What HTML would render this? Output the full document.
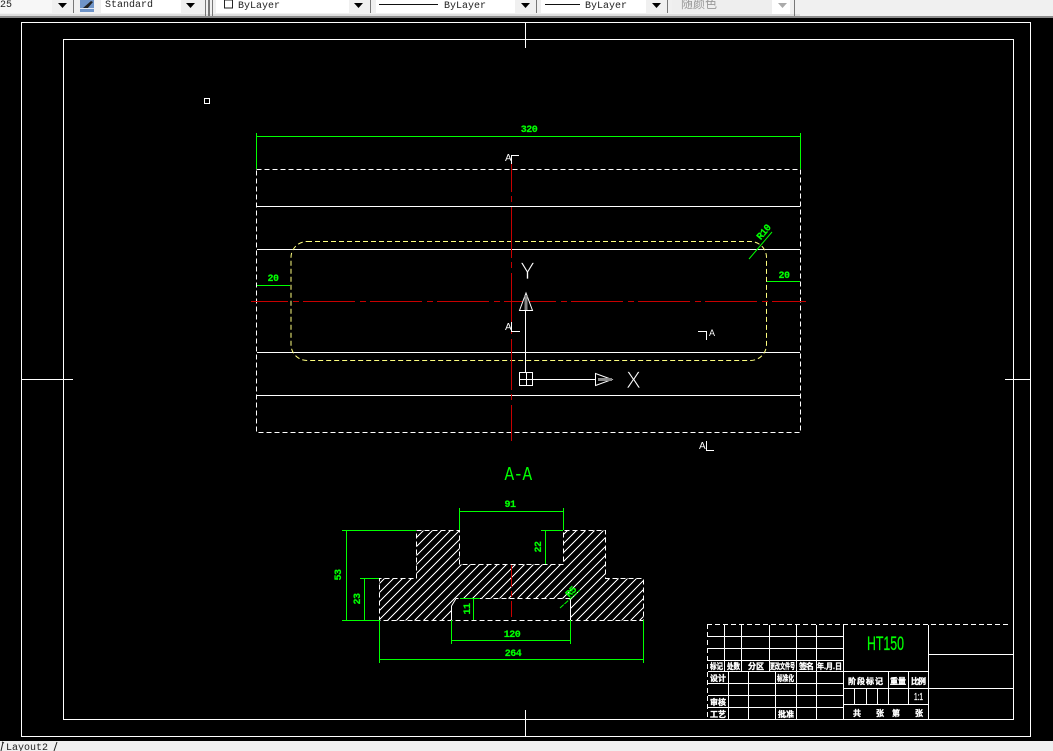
<!DOCTYPE html>
<html><head><meta charset="utf-8"><title>CAD</title>
<style>
html,body{margin:0;padding:0;width:1053px;height:751px;overflow:hidden;background:#000}
svg{display:block}
.l{stroke:#fff;stroke-width:1;fill:none;shape-rendering:crispEdges}
.g{stroke:#00ff00;stroke-width:1;fill:none;shape-rendering:crispEdges}
.d{stroke-dasharray:5 3}
.tb{font-family:"Liberation Mono",monospace;font-size:10px;fill:#222}
.gt{font-family:"Liberation Mono",monospace;font-size:10px;font-weight:bold;fill:#00ff00;text-anchor:middle;stroke:#00ff00;stroke-width:.2;letter-spacing:-.5px}
.cj{font-family:"Liberation Sans","Noto Sans CJK SC",sans-serif;font-size:8px;font-weight:bold;fill:#fff;stroke:#fff;stroke-width:.35}
.a{font-family:"Liberation Sans",sans-serif;font-size:10px;fill:#fff}
.ucs{font-family:"Liberation Sans",sans-serif;font-size:24px;fill:#fff;stroke:#000;stroke-width:.8;paint-order:fill stroke}
</style></head>
<body>
<svg width="1053" height="751" viewBox="0 0 1053 751" xmlns="http://www.w3.org/2000/svg">
<defs>
<pattern id="h" width="9" height="9" patternUnits="userSpaceOnUse"><path d="M-1 10L10 -1M-1 1L1 -1M8 10L10 8" stroke="#fff" stroke-width="1" fill="none" shape-rendering="crispEdges"/></pattern>
</defs>
<rect width="1053" height="751" fill="#000"/>
<!-- top toolbar -->
<rect x="0" y="0" width="1053" height="17" fill="#f0f0f0"/>
<rect x="0" y="16" width="1053" height="2" fill="#8c8c8c"/>
<rect x="0" y="14" width="800" height="2" fill="#dedede"/>
<rect x="0" y="0" width="52" height="13" fill="#f7f7f7"/><rect x="101" y="0" width="80" height="13" fill="#fff"/>
<rect x="216" y="0" width="133" height="13" fill="#fff"/><rect x="376" y="0" width="139" height="13" fill="#fff"/><rect x="541" y="0" width="105" height="13" fill="#fff"/>
<rect x="672" y="0" width="100" height="13" fill="#eee"/><rect x="772" y="0" width="18" height="14" fill="#fff"/>
<g fill="#000"><path d="M58 3h9l-4.500 5z"/><path d="M186 3h9l-4.500 5z"/><path d="M354 3h9l-4.500 5z"/><path d="M521 3h9l-4.500 5z"/><path d="M652 3h9l-4.500 5z"/></g>
<path d="M778 3h9l-4.500 5z" fill="#aaa"/>
<g fill="#777"><rect x="73" y="0" width="1" height="13"/><rect x="205" y="0" width="1" height="16"/><rect x="208" y="0" width="2" height="16"/><rect x="212" y="0" width="1" height="16"/><rect x="370" y="0" width="1" height="13"/><rect x="536" y="0" width="1" height="13"/><rect x="667" y="0" width="1" height="13"/><rect x="794" y="0" width="1" height="16"/></g>
<rect x="80" y="0" width="14" height="12" fill="#6f94c8"/><path d="M83 8L91 1l2 1-6 7z" fill="#222"/><rect x="80" y="8" width="14" height="1" fill="#dfe8f5"/>
<text class="tb" x="0" y="7">25</text>
<text class="tb" x="105" y="7">Standard</text>
<rect x="224.500" y="0" width="8" height="8" fill="#fff" stroke="#222"/>
<text class="tb" x="238" y="8">ByLayer</text>
<rect x="379" y="4" width="59" height="1" fill="#111"/>
<text class="tb" x="444" y="8">ByLayer</text>
<rect x="545" y="4" width="35" height="1" fill="#111"/>
<text class="tb" x="585" y="8">ByLayer</text>
<text x="681" y="8" style="font-family:'Liberation Sans','Noto Sans CJK SC',sans-serif;font-size:12px;fill:#999">随颜色</text>
<!-- bottom bar -->
<rect x="0" y="741" width="1053" height="10" fill="#f0f0f0"/>
<text x="6" y="750" style="font-family:'Liberation Mono',monospace;font-size:10px;fill:#222">Layout2</text>
<path d="M3 742L1 751M2 742l2 1M57 742l-3 9" stroke="#222" fill="none"/>
<!-- sheet -->
<rect class="l" x="21.500" y="22.500" width="1009" height="714"/>
<rect class="l" x="63.500" y="39.500" width="950" height="680"/>
<path class="l" d="M525.500 23V48M525.500 710V737M22 379.500H73M1005 379.500H1030"/>
<rect class="l" x="204.500" y="98.500" width="5" height="5"/>
<!-- plan -->
<path class="l" d="M257 206.500H800M257 249.500H800M257 352.500H800M257 395.500H800"/>
<rect class="l d" x="256.500" y="169.500" width="544" height="263"/>
<rect x="291" y="241.500" width="475.500" height="119" rx="16" ry="16" fill="none" stroke="#ffff80" stroke-width="1" stroke-dasharray="5 3"/>
<path d="M251 301.500H806" stroke="#c80000" fill="none" stroke-dasharray="52 5 6 4" stroke-dashoffset="15" shape-rendering="crispEdges"/>
<path d="M511.500 164V441" stroke="#c80000" fill="none" stroke-dasharray="51 4 6 5" stroke-dashoffset="23" shape-rendering="crispEdges"/>
<!-- plan dims -->
<path class="g" d="M256.500 133V169M800.500 133V169M256 136.500H801"/>
<text class="gt" x="529" y="132">320</text>
<path class="g" d="M257 285.500H290"/><text class="gt" x="273" y="281">20</text>
<path class="g" d="M767 281.500H800"/><text class="gt" x="784" y="278">20</text>
<path d="M749 259L772 232" stroke="#00ff00" fill="none"/>
<text class="gt" transform="translate(766 234) rotate(-50)" x="0" y="0">R10</text>
<!-- section marks -->
<text class="a" x="505" y="161">A</text><path class="l" d="M511.500 164V155.500H519"/>
<text class="a" x="505" y="330">A</text><path class="l" d="M511.500 322V331.500H520"/>
<path class="l" d="M698 331.500H706.500V340"/><text class="a" x="709" y="336" style="font-size:9px">A</text>
<text class="a" x="699" y="449">A</text><path class="l" d="M706.500 441V450.500H714"/>
<!-- UCS -->
<path class="l" d="M525.500 372V310M533 379.500H596"/>
<rect class="l" x="519.500" y="372.500" width="13" height="13"/><path class="l" d="M526.500 372V386M519 379.500H533"/>
<path d="M519.500 310.500H532.500L526 293Z" fill="#000" stroke="#fff"/><path d="M526 296V310" stroke="#888" stroke-width="3"/>
<path d="M595.500 373.500V385.500L612 379.500Z" fill="#000" stroke="#fff"/><path d="M598 379.500H612" stroke="#888" stroke-width="3"/>
<text class="ucs" x="520" y="279" textLength="15" lengthAdjust="spacingAndGlyphs">Y</text>
<text class="ucs" x="626" y="388" textLength="15" lengthAdjust="spacingAndGlyphs">X</text>
<!-- section -->
<text class="gt" transform="translate(518 480) scale(1 1.5)" style="font-size:13px;stroke-width:0;font-weight:normal" textLength="27" lengthAdjust="spacingAndGlyphs">A-A</text>
<path d="M416.500 530.500H459.500V564.500H563.500V530.500H605.500V578.500H643.500V620.500H570.500V598.500H456L451.500 604V620.500H379.500V578.500H416.500Z" fill="url(#h)"/>
<path class="l" stroke-dasharray="5 3" d="M416.500 530.500H459.500V564.500H563.500V530.500H605.500V578.500H643.500V620.500H379.500V578.500H416.500Z"/>
<path class="l d" d="M570.500 598.500H456"/>
<path d="M451.500 620V606L456 598.500" stroke="#fff" fill="none"/>
<path class="l" d="M570.500 598V620"/>
<path d="M511.500 565V617" stroke="#c80000" stroke-dasharray="22 4 6 4" fill="none" shape-rendering="crispEdges"/>
<path class="g" d="M459.500 508V530M563.500 508V530M459 511.500H564"/><text class="gt" x="510" y="507">91</text>
<path class="g" d="M342 530.500H416M342 620.500H379M346.500 530V620"/>
<text class="gt" transform="translate(341 575) rotate(-90)">53</text>
<path class="g" d="M360 578.500H379M364.500 578V620"/>
<text class="gt" transform="translate(360 599) rotate(-90)">23</text>
<path class="g" d="M541 530.500H563M545.500 530V564"/>
<text class="gt" transform="translate(541 547) rotate(-90)">22</text>
<path class="g" d="M460 598.500H480M473.500 598V620"/>
<text class="gt" transform="translate(470 609) rotate(-90)">11</text>
<path class="g" d="M451.500 620V644M570.500 620V644M451 640.500H571"/><text class="gt" x="512" y="637">120</text>
<path class="g" d="M379.500 620V663M643.500 620V663M379 659.500H644"/><text class="gt" x="513" y="656">264</text>
<path d="M560 608L580 590" stroke="#00ff00" fill="none" stroke-dasharray="5 1"/>
<text class="gt" transform="translate(573 594) rotate(-45)">R5</text>
<!-- title block -->
<path class="l d" d="M707 624.500H1011M707.500 624V719"/>
<path class="l" d="M724.500 625V671M741.500 625V671M769.500 625V671M796.500 625V719M816.500 625V719M843.500 625V719M708 636.500H843M708 648.500H843M708 660.500H843M708 671.500H928
M728.500 671V719M748.500 671V719M775.500 671V719M708 683.500H843M708 695.500H843M708 707.500H843
M928.500 625V719M928 654.500H1013M843 688.500H1013M843 704.500H928M888.500 671V704M908.500 671V704M854.500 688V704M866.500 688V704M877.500 688V704"/>
<text x="867" y="650" textLength="37" lengthAdjust="spacingAndGlyphs" style="font-family:'Liberation Sans',sans-serif;font-size:19px;fill:#00ff00;stroke:#00ff00;stroke-width:.25">HT150</text>
<g class="cj">
<text x="710" y="669" textLength="13" lengthAdjust="spacingAndGlyphs">标记</text>
<text x="727" y="669" textLength="13" lengthAdjust="spacingAndGlyphs">处数</text>
<text x="748" y="669" textLength="16" lengthAdjust="spacing">分区</text>
<text x="770" y="669" textLength="25" lengthAdjust="spacingAndGlyphs">更改文件号</text>
<text x="799" y="669" textLength="15" lengthAdjust="spacing">签名</text>
<text x="817" y="669" textLength="25" lengthAdjust="spacingAndGlyphs">年.月.日</text>
<text x="710" y="681" textLength="16" lengthAdjust="spacing">设计</text>
<text x="777" y="681" textLength="17" lengthAdjust="spacingAndGlyphs">标准化</text>
<text x="710" y="705" textLength="16" lengthAdjust="spacing">审核</text>
<text x="710" y="717" textLength="16" lengthAdjust="spacing">工艺</text>
<text x="778" y="717" textLength="16" lengthAdjust="spacing">批准</text>
<text x="848" y="684" textLength="35" lengthAdjust="spacing">阶段标记</text>
<text x="890" y="684" textLength="16" lengthAdjust="spacing">重量</text>
<text x="911" y="684" textLength="15" lengthAdjust="spacing">比例</text>
<text x="853" y="716">共</text><text x="876" y="716">张</text><text x="892" y="716">第</text><text x="915" y="716">张</text>
</g>
<text x="914" y="700" textLength="9" lengthAdjust="spacingAndGlyphs" style="font-family:'Liberation Sans',sans-serif;font-size:10px;fill:#fff;stroke:#fff;stroke-width:.3">1:1</text>
</svg>
</body></html>
